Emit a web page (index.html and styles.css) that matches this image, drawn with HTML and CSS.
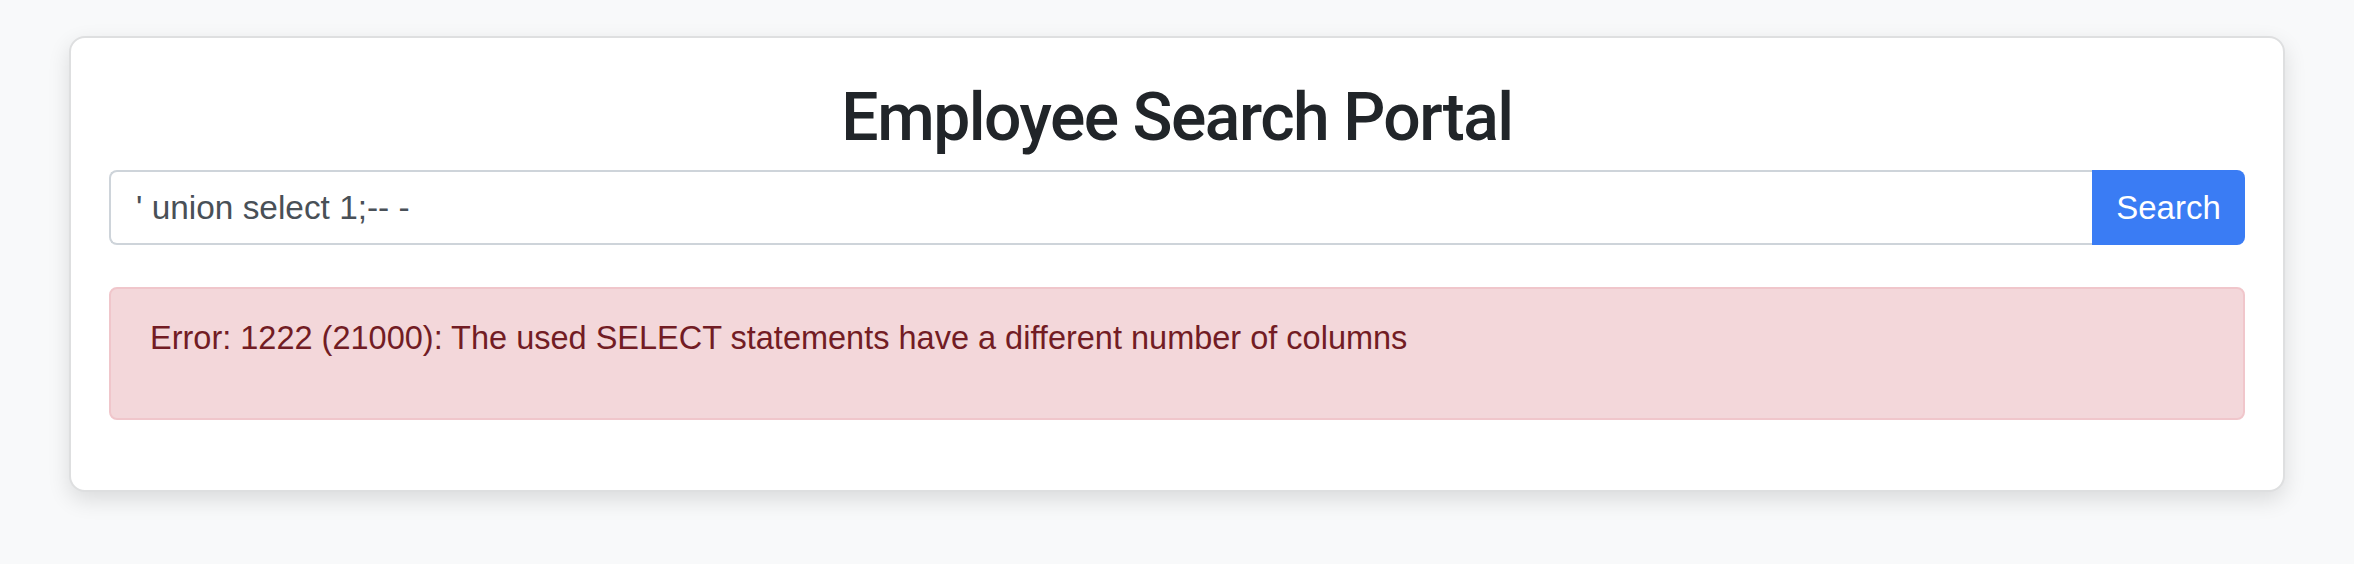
FILE: index.html
```html
<!DOCTYPE html>
<html lang="en">
<head>
<meta charset="utf-8">
<title>Employee Search Portal</title>
<link rel="stylesheet" href="styles.css">
</head>
<body>
  <main class="card">
    <h1 class="title">Employee Search Portal</h1>
    <form class="search-group">
      <input class="search-input" type="text" value="' union select 1;-- -">
      <button class="search-btn" type="button">Search</button>
    </form>
    <div class="alert">
      <p class="alert-text">Error: 1222 (21000): The used SELECT statements have a different number of columns</p>
    </div>
  </main>
</body>
</html>
```

FILE: styles.css
```css
* { box-sizing: border-box; }

html, body {
  margin: 0;
  padding: 0;
}

body {
  min-height: 100vh;
  background: #f8f9fa;
  font-family: "Liberation Sans", Arial, sans-serif;
  color: #212529;
  padding: 36px 69px 0;
}

.card {
  display: flex;
  flex-direction: column;
  background: #ffffff;
  border: 2px solid #dedfe0;
  border-radius: 16px;
  box-shadow: 0 8px 22px rgba(0, 0, 0, 0.12);
  padding: 40px 38px 38px;
}

.title {
  margin: 0 0 12px;
  font-family: Roboto, "Liberation Sans", sans-serif;
  font-size: 66px;
  line-height: 80px;
  font-weight: 500;
  letter-spacing: -1.5px;
  text-align: center;
  color: #212529;
}

.search-group {
  display: flex;
  margin: 0;
  height: 75px;
}

.search-input {
  flex: 1;
  min-width: 0;
  height: 75px;
  margin: 0;
  border: 2px solid #ced4da;
  border-right: none;
  border-radius: 8px 0 0 8px;
  padding: 12px 25px;
  font-family: "Liberation Sans", Arial, sans-serif;
  font-size: 33.4px;
  color: #495057;
  background: #fff;
  outline: none;
}

.search-btn {
  width: 153px;
  height: 75px;
  margin: 0;
  border: none;
  border-radius: 0 8px 8px 0;
  background: #3a7cf4;
  color: #ffffff;
  font-family: "Liberation Sans", Arial, sans-serif;
  font-size: 33px;
  padding: 0 24px;
}

.alert {
  margin: 42px 0 32px;
  background: #f3d7da;
  border: 2px solid #f0c6cb;
  border-radius: 8px;
  padding: 25px 40px 56px 39px;
  color: #721c24;
}

.alert-text {
  margin: 0;
  font-size: 32.5px;
  line-height: 48px;
}
```
